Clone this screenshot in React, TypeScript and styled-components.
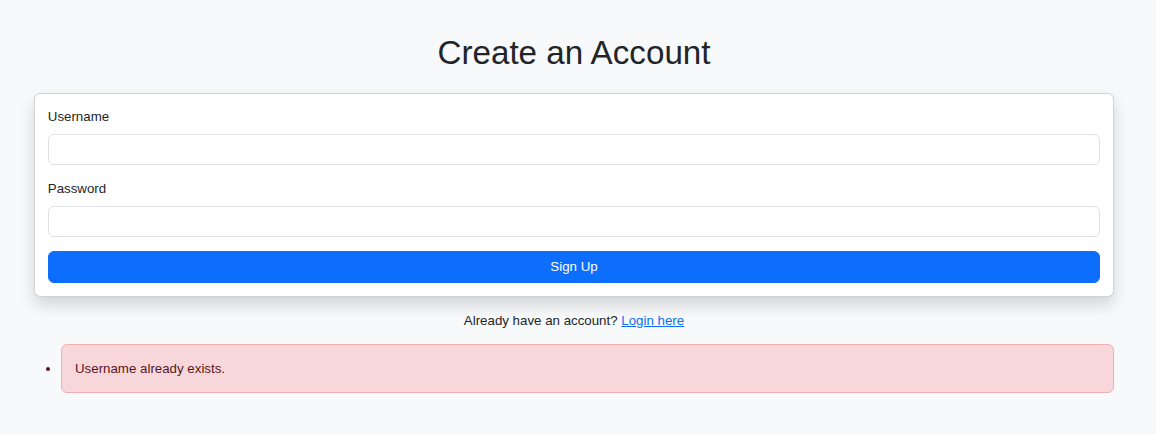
import React from "react";
import styled, { createGlobalStyle } from "styled-components";

const GlobalStyle = createGlobalStyle`
  html, body {
    margin: 0;
    padding: 0;
    background: #f8f9fa;
    color: #212529;
    font-family: "Liberation Sans", Arial, sans-serif;
    font-size: 13.3px;
    line-height: 21px;
  }
  * { box-sizing: border-box; }
`;

const Page = styled.main`
  width: 1080px;
  margin-left: 34px;
  padding-top: 33px;
`;

const Title = styled.h1`
  margin: 0 0 20.3px;
  font-size: 33.2px;
  font-weight: 400;
  line-height: 1.2;
  text-align: center;
  color: #212529;
`;

const Card = styled.form`
  background: #fff;
  border: 1px solid rgba(0, 0, 0, 0.175);
  border-radius: 6px;
  box-shadow: 0 8px 16px rgba(0, 0, 0, 0.15);
  padding: 12.8px;
  display: flex;
  flex-direction: column;
`;

const Field = styled.div`
  display: flex;
  flex-direction: column;
  margin-bottom: 13.5px;
`;

const Label = styled.label`
  display: block;
  font-size: 13.3px;
  line-height: 19px;
  margin-bottom: 8px;
`;

const Input = styled.input`
  display: block;
  width: 100%;
  height: 31.5px;
  padding: 5.25px 10.5px;
  font: inherit;
  color: #212529;
  background: #fff;
  border: 1px solid #dee2e6;
  border-radius: 6px;
  outline: none;
`;

const Button = styled.button`
  display: block;
  width: 100%;
  height: 32px;
  border: 1px solid #0d6efd;
  border-radius: 6px;
  background: #0d6efd;
  color: #fff;
  font: inherit;
  font-size: 13.3px;
  line-height: 21px;
  cursor: pointer;
`;

const Footer = styled.p`
  margin: 13px 0 0;
  text-align: center;
  font-size: 13.3px;
  line-height: 21px;
`;

const Link = styled.a`
  color: #0d6efd;
  text-decoration: underline;
`;

const ErrorList = styled.ul`
  margin: 13.4px 0 0;
  padding-left: 27px;
  color: #58151c;
`;

const ErrorItem = styled.li`
  font-size: 13.3px;
`;

const Alert = styled.div`
  padding: 12.8px 13px;
  background: #f8d7da;
  border: 1px solid #f1aeb5;
  border-radius: 6px;
  color: #58151c;
  line-height: 21px;
`;

export default function App() {
  return (
    <>
      <GlobalStyle />
      <Page>
        <Title>Create an Account</Title>
        <Card onSubmit={(e) => e.preventDefault()}>
          <Field>
            <Label htmlFor="username">Username</Label>
            <Input id="username" type="text" />
          </Field>
          <Field>
            <Label htmlFor="password">Password</Label>
            <Input id="password" type="password" />
          </Field>
          <Button type="submit">Sign Up</Button>
        </Card>
        <Footer>
          Already have an account? <Link href="#">Login here</Link>
        </Footer>
        <ErrorList>
          <ErrorItem>
            <Alert>Username already exists.</Alert>
          </ErrorItem>
        </ErrorList>
      </Page>
    </>
  );
}
